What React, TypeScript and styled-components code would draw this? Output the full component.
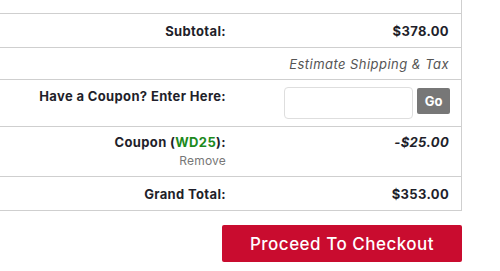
import React from "react";
import styled, { createGlobalStyle } from "styled-components";

const Global = createGlobalStyle`
  html, body { margin: 0; padding: 0; background: #fff; }
  body { font-family: Inter, "Open Sans", sans-serif; color: #1f1f2b; }
`;

const Page = styled.div`
  width: 500px;
  height: 271px;
  overflow: hidden;
`;

const Summary = styled.div`
  width: 461px;
  border-right: 1px solid #cfcfcf;
`;

const Row = styled.div<{ $h: number; $top?: number }>`
  display: grid;
  grid-template-columns: 238px 1fr;
  height: ${(p) => p.$h}px;
  border-bottom: 1px solid #cfcfcf;
  align-items: ${(p) => (p.$top !== undefined ? "start" : "center")};
  padding-top: ${(p) => p.$top ?? 0}px;
  box-sizing: border-box;
`;

const Label = styled.div`
  text-align: right;
  padding-right: 12px;
  font-size: 13px;
  font-weight: 700;
  line-height: 20px;
  letter-spacing: 0.35px;
`;

const Value = styled.div<{ $italic?: boolean; $muted?: boolean }>`
  text-align: right;
  padding-right: 12px;
  font-size: 13px;
  line-height: 20px;
  letter-spacing: ${(p) => (p.$muted ? "0.45px" : "0.35px")};
  font-weight: ${(p) => (p.$muted ? 400 : 700)};
  font-style: ${(p) => (p.$italic ? "italic" : "normal")};
  color: ${(p) => (p.$muted ? "#555" : "#1f1f2b")};
`;

const Code = styled.span`
  color: #1d8a1d;
`;

const Remove = styled.div`
  font-size: 12px;
  font-weight: 400;
  color: #777;
  line-height: 18px;
  letter-spacing: 0.2px;
`;

const CouponForm = styled.div`
  display: flex;
  justify-content: flex-end;
  align-items: flex-start;
  gap: 4px;
  padding-right: 11px;
`;

const CouponInput = styled.input`
  width: 129px;
  height: 32px;
  box-sizing: border-box;
  border: 1px solid #dedede;
  border-radius: 4px;
  margin-top: 1px;
`;

const GoButton = styled.button`
  width: 33px;
  height: 26px;
  margin-top: 2px;
  border: none;
  border-radius: 2px;
  background: #777;
  color: #fff;
  font-family: Inter, sans-serif;
  font-size: 13px;
  font-weight: 700;
  padding: 0;
`;

const Actions = styled.div`
  width: 462px;
  display: flex;
  justify-content: flex-end;
  padding-top: 14px;
`;

const Checkout = styled.button`
  width: 240px;
  height: 37px;
  border: none;
  border-radius: 2px;
  background: #c90c2f;
  color: #fff;
  font-family: Inter, sans-serif;
  font-size: 17px;
  font-weight: 500;
  letter-spacing: 0.5px;
  padding: 0;
`;

export default function App() {
  return (
    <Page>
      <Global />
      <Summary>
        <Row $h={14} />
        <Row $h={34}>
          <Label>Subtotal:</Label>
          <Value>$378.00</Value>
        </Row>
        <Row $h={32}>
          <Label />
          <Value $italic $muted>Estimate Shipping &amp; Tax</Value>
        </Row>
        <Row $h={47} $top={6}>
          <Label>Have a Coupon? Enter Here:</Label>
          <CouponForm>
            <CouponInput type="text" />
            <GoButton>Go</GoButton>
          </CouponForm>
        </Row>
        <Row $h={50} $top={5}>
          <Label>
            Coupon (<Code>WD25</Code>):
            <Remove>Remove</Remove>
          </Label>
          <Value $italic>-$25.00</Value>
        </Row>
        <Row $h={34}>
          <Label>Grand Total:</Label>
          <Value>$353.00</Value>
        </Row>
      </Summary>
      <Actions>
        <Checkout>Proceed To Checkout</Checkout>
      </Actions>
    </Page>
  );
}
